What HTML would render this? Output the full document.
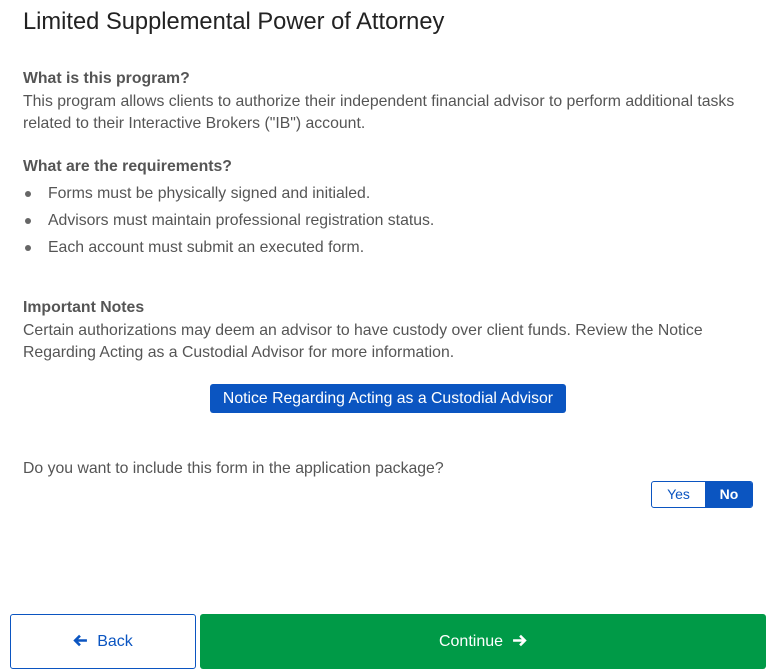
<!DOCTYPE html>
<html><head><style>
*{margin:0;padding:0;box-sizing:border-box}
body{width:774px;height:671px;background:#fff;font-family:"Liberation Sans",sans-serif;color:#555;position:relative;overflow:hidden;font-size:15.8px}
.a{position:absolute;white-space:nowrap}
h1{position:absolute;left:23px;top:9px;font-size:23.7px;font-weight:normal;color:#222}
b{color:#555}
.bul{position:absolute;left:25px;width:6px;height:6px;border-radius:50%;background:#666}
</style></head><body>
<h1>Limited Supplemental Power of Attorney</h1>
<div class="a" style="left:23px;top:70px"><b>What is this program?</b></div>
<div class="a" style="left:23px;top:93px">This program allows clients to authorize their independent financial advisor to perform additional tasks</div>
<div class="a" style="left:23px;top:115px">related to their Interactive Brokers ("IB") account.</div>
<div class="a" style="left:23px;top:158px"><b>What are the requirements?</b></div>
<div class="bul" style="top:191px"></div><div class="a" style="left:48px;top:185px">Forms must be physically signed and initialed.</div>
<div class="bul" style="top:218px"></div><div class="a" style="left:48px;top:212px">Advisors must maintain professional registration status.</div>
<div class="bul" style="top:245px"></div><div class="a" style="left:48px;top:239px">Each account must submit an executed form.</div>
<div class="a" style="left:23px;top:299px"><b>Important Notes</b></div>
<div class="a" style="left:23px;top:322px">Certain authorizations may deem an advisor to have custody over client funds. Review the Notice</div>
<div class="a" style="left:23px;top:344px">Regarding Acting as a Custodial Advisor for more information.</div>
<div class="a" style="left:210px;top:384px;width:356px;height:29px;background:#0b55c1;border-radius:3px;color:#fff;text-align:center;line-height:30px;font-size:15.8px">Notice Regarding Acting as a Custodial Advisor</div>
<div class="a" style="left:23px;top:460px">Do you want to include this form in the application package?</div>
<div class="a" style="left:651px;top:481px;width:102px;height:27px;border:1px solid #0b55c1;border-radius:3px;overflow:hidden;font-size:14px">
<div style="position:absolute;left:0;top:0;width:53px;height:25px;line-height:25px;text-align:center;color:#0b55c1">Yes</div>
<div style="position:absolute;left:53px;top:0;width:48px;height:25px;line-height:25px;text-align:center;background:#0b55c1;color:#fff;font-weight:bold">No</div>
</div>
<div class="a" style="left:10px;top:614px;width:186px;height:55px;border:1px solid #0b55c1;border-radius:3px;color:#0b55c1;text-align:center;line-height:54px;font-size:16px">
<svg width="15" height="13" viewBox="0 0 14 12" style="vertical-align:-1px;margin-right:9px"><path d="M13 6H2M6.5 1.5L2 6l4.5 4.5" stroke="#0b55c1" stroke-width="2.4" fill="none"/></svg>Back</div>
<div class="a" style="left:200px;top:614px;width:566px;height:55px;background:#009a47;border-radius:3px;color:#fff;text-align:center;line-height:56px;font-size:16px">Continue<svg width="15" height="13" viewBox="0 0 14 12" style="vertical-align:-1px;margin-left:9px"><path d="M1 6h11M7.5 1.5L12 6l-4.5 4.5" stroke="#fff" stroke-width="2.4" fill="none"/></svg></div>
</body></html>
